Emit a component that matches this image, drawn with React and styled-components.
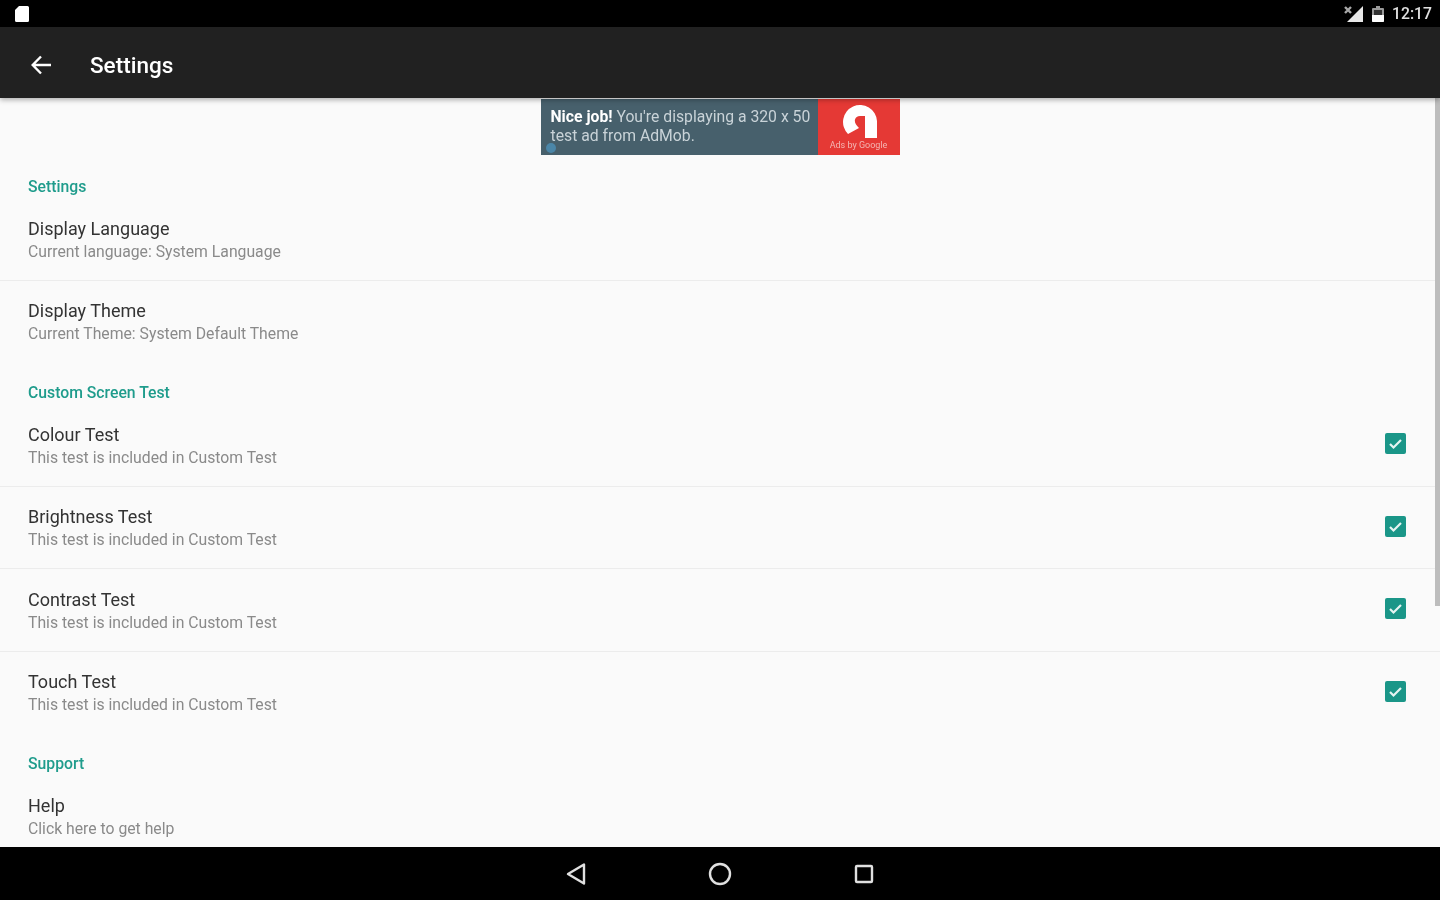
import React from 'react'
import styled, { createGlobalStyle } from 'styled-components'

const GlobalStyle = createGlobalStyle`
  html, body {
    margin: 0;
    padding: 0;
    background: #000;
    font-family: Roboto, "Liberation Sans", sans-serif;
  }
`

const sections = [
  {
    title: 'Settings',
    rows: [
      { name: 'Display Language', info: 'Current language: System Language' },
      { name: 'Display Theme', info: 'Current Theme: System Default Theme' }
    ]
  },
  {
    title: 'Custom Screen Test',
    rows: [
      { name: 'Colour Test', info: 'This test is included in Custom Test', checked: true },
      { name: 'Brightness Test', info: 'This test is included in Custom Test', checked: true },
      { name: 'Contrast Test', info: 'This test is included in Custom Test', checked: true },
      { name: 'Touch Test', info: 'This test is included in Custom Test', checked: true }
    ]
  },
  {
    title: 'Support',
    rows: [{ name: 'Help', info: 'Click here to get help' }]
  }
]

export default function App () {
  return (
    <>
      <GlobalStyle />
      <Screen>
        <StatusBar>
          <SdIcon viewBox='0 0 14 16'>
            <path d='M4 0h8.5A1.5 1.5 0 0 1 14 1.5v13a1.5 1.5 0 0 1-1.5 1.5h-11A1.5 1.5 0 0 1 0 14.500V4z' fill='#fff' />
          </SdIcon>
          <StatusRight>
            <svg width='20' height='16' viewBox='0 0 20 16'>
              <path d='M19 0v16H3z' fill='#e8e8e8' />
              <path d='M1 1l6 6M7 1L1 7' stroke='#a8a8a8' strokeWidth='2.4' />
            </svg>
            <svg width='12' height='16' viewBox='0 0 12 16'>
              <path d='M4 0h4v2h3a1 1 0 0 1 1 1v12a1 1 0 0 1-1 1H1a1 1 0 0 1-1-1V3a1 1 0 0 1 1-1h3z' fill='#9a9a9a' />
              <path d='M2 4h8v5H2z' fill='#333' />
              <path d='M0 9h12v6a1 1 0 0 1-1 1H1a1 1 0 0 1-1-1z' fill='#fff' />
            </svg>
            <Clock>12:17</Clock>
          </StatusRight>
        </StatusBar>
        <Toolbar>
          <svg width='20' height='20' viewBox='0 0 20 20' fill='none' stroke='#fff' strokeWidth='2.4'>
            <path d='M20 10H2M10 1.500L1.700 10l8.300 8.500' />
          </svg>
          <ToolbarTitle>Settings</ToolbarTitle>
        </Toolbar>
        <Content>
          <AdBanner>
            <AdText>
              <p><strong>Nice job!</strong> You're displaying a 320 x 50 test ad from AdMob.</p>
              <AdChoice />
            </AdText>
            <AdLogo>
              <svg width='36' height='36' viewBox='0 0 36 36'>
                <path d='M36 35V18A17 17 0 1 0 7 31L18 25Q13 20 14 16.500Q15 13 19 13H24V35z' fill='#fff' />
              </svg>
              <AdLabel>Ads by Google</AdLabel>
            </AdLogo>
          </AdBanner>
          {sections.map(section => (
            <section key={section.title}>
              <SectionTitle>{section.title}</SectionTitle>
              {section.rows.map((row, i) => (
                <Row key={row.name} $divided={i < section.rows.length - 1}>
                  <div>
                    <RowName>{row.name}</RowName>
                    <RowInfo>{row.info}</RowInfo>
                  </div>
                  {row.checked && (
                    <CheckBox>
                      <svg width='15' height='15' viewBox='0 0 15 15' fill='none' stroke='#e6f4f2' strokeWidth='2.2'>
                        <path d='M2 8l3.500 3.500L13 4' />
                      </svg>
                    </CheckBox>
                  )}
                </Row>
              ))}
            </section>
          ))}
          <ScrollThumb />
        </Content>
        <NavBar>
          <svg width='24' height='24' viewBox='0 0 24 24' fill='none' stroke='#e0e0e0' strokeWidth='2.400' strokeLinejoin='round'>
            <path d='M20 2.500v19L4 12z' />
          </svg>
          <svg width='24' height='24' viewBox='0 0 24 24' fill='none' stroke='#e0e0e0' strokeWidth='2.400'>
            <circle cx='12' cy='12' r='10' />
          </svg>
          <svg width='24' height='24' viewBox='0 0 24 24' fill='none' stroke='#e0e0e0' strokeWidth='2.400' strokeLinejoin='round'>
            <rect x='4' y='4' width='16' height='16' rx='1' />
          </svg>
        </NavBar>
      </Screen>
    </>
  )
}

const Screen = styled.div`
  display: flex;
  flex-direction: column;
  width: 1440px;
  height: 900px;
  overflow: hidden;
  filter: blur(0.7px);
`
const StatusBar = styled.div`
  display: flex;
  flex: none;
  align-items: center;
  justify-content: space-between;
  height: 27px;
  padding: 0 8px 0 15px;
  background: #000;
`
const SdIcon = styled.svg`
  width: 14px;
  height: 16px;
`
const StatusRight = styled.div`
  display: flex;
  align-items: center;
  gap: 8px;
`
const Clock = styled.span`
  color: #e0e0e0;
  font-size: 15.750px;
  font-weight: 500;
`
const Toolbar = styled.header`
  position: relative;
  z-index: 2;
  display: flex;
  flex: none;
  align-items: center;
  gap: 39px;
  height: 71px;
  padding: 5px 0 0 31px;
  box-sizing: border-box;
  background: #212121;
  box-shadow: 0 2px 5px rgba(0, 0, 0, 0.3);
`
const ToolbarTitle = styled.h1`
  margin: 0;
  color: #fff;
  font-size: 22.500px;
  font-weight: 500;
`
const Content = styled.main`
  position: relative;
  flex: 1;
  min-height: 0;
  overflow: hidden;
  background: #fafafa;
`
const AdBanner = styled.div`
  display: flex;
  width: 359px;
  height: 56px;
  margin: 1px auto 2px;
  background: #47606c;
`
const AdText = styled.div`
  position: relative;
  flex: 1;
  padding: 8px 6px 0 10px;
  color: #c9d3d8;
  font-size: 15.750px;
  line-height: 19px;
  p {
    margin: 0;
  }
  strong {
    color: #fff;
    font-weight: 700;
  }
`
const AdChoice = styled.span`
  position: absolute;
  left: 5px;
  bottom: 2px;
  width: 10px;
  height: 10px;
  border-radius: 50%;
  background: #4b86a8;
`
const AdLogo = styled.div`
  display: flex;
  flex: none;
  flex-direction: column;
  align-items: center;
  width: 82px;
  padding-top: 4px;
  box-sizing: border-box;
  background: #e53935;
`
const AdLabel = styled.span`
  margin-top: 1px;
  color: #f4b5b2;
  font-size: 9px;
  line-height: 11px;
  white-space: nowrap;
`
const SectionTitle = styled.h2`
  height: 41px;
  margin: 0;
  padding: 21px 0 0 28px;
  box-sizing: border-box;
  color: #1f9c8c;
  font-size: 15.750px;
  font-weight: 500;
  line-height: 18px;
`
const Row = styled.div`
  display: flex;
  align-items: center;
  justify-content: space-between;
  height: 82.500px;
  padding: 21px 34px 0 28px;
  box-sizing: border-box;
  border-bottom: 1px solid ${props => (props.$divided ? '#ececec' : 'transparent')};
`
const RowName = styled.div`
  color: #333;
  font-size: 18px;
  line-height: 22px;
`
const RowInfo = styled.div`
  margin-top: 1px;
  color: #8a8a8a;
  font-size: 15.750px;
  line-height: 21px;
  padding-bottom: 19px;
`
const CheckBox = styled.span`
  display: flex;
  align-items: center;
  justify-content: center;
  width: 21px;
  height: 21px;
  margin-bottom: 23px;
  border-radius: 2px;
  background: #1a9688;
`
const ScrollThumb = styled.div`
  position: absolute;
  top: 0;
  right: 0;
  width: 5px;
  height: 508px;
  background: #bdbdbd;
`
const NavBar = styled.nav`
  display: flex;
  flex: none;
  align-items: center;
  justify-content: center;
  gap: 120px;
  height: 53px;
  background: #000;
`
